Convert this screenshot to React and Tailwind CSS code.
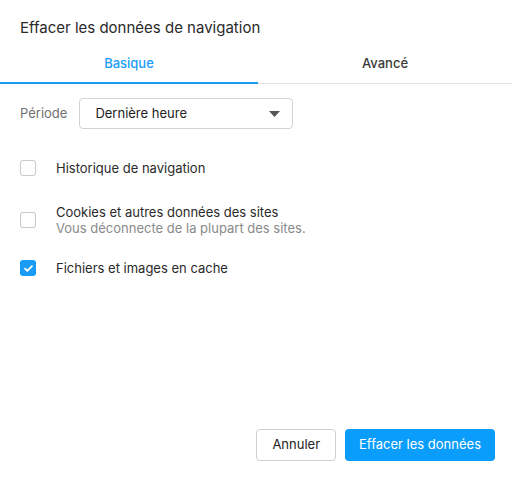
import React, { useState } from 'react';

const font = { fontFamily: 'Inter, "Liberation Sans", sans-serif' };

function Check({ checked }) {
  if (checked) {
    return (
      <span className="block w-4 h-4 rounded-[3px] bg-[#1a9bf5] flex items-center justify-center shrink-0">
        <svg width="11" height="11" viewBox="0 0 12 12">
          <path d="M2.2 6.2l2.5 2.5 5.1-5.3" fill="none" stroke="white" strokeWidth="2" strokeLinecap="round" strokeLinejoin="round" />
        </svg>
      </span>
    );
  }
  return <span className="block w-4 h-4 rounded-[3px] border border-[#c9c9c9] bg-white shrink-0" />;
}

export default function App() {
  const [items] = useState([
    { label: 'Historique de navigation', checked: false, cls: '' },
    { label: 'Cookies et autres données des sites', sub: 'Vous déconnecte de la plupart des sites.', checked: false, cls: 'mt-[28px]' },
    { label: 'Fichiers et images en cache', checked: true, cls: 'mt-[24px]' },
  ]);

  return (
    <div className="w-[512px] h-[477px] bg-white flex flex-col text-[#303030]" style={font}>
      <h1 className="px-5 pt-[18px] text-[15px] leading-5 text-[#2a2a2a]">Effacer les données de navigation</h1>

      {/* Tabs */}
      <div className="mt-[13px] flex border-b border-[#e3e3e3]">
        <div className="w-[258px] h-[33px] flex items-start justify-center border-b-2 border-[#1a9bf5] -mb-px text-[13px] font-medium text-[#1a9bf5] pt-[3px]">
          Basique
        </div>
        <div className="flex-1 flex items-start justify-center text-[13px] font-medium text-[#3a3a3a] pt-[3px]">
          Avancé
        </div>
      </div>

      {/* Période */}
      <div className="mt-[14px] px-5 flex items-center gap-3">
        <span className="text-[13px] text-[#707070]">Période</span>
        <div className="w-[214px] h-[31px] border border-[#d2d2d2] rounded-[4px] flex items-center justify-between pl-[15px] pr-[12px] text-[13px] text-[#222]">
          Dernière heure
          <svg width="11" height="6" viewBox="0 0 11 6">
            <path d="M0 0h11L5.5 6z" fill="#555" />
          </svg>
        </div>
      </div>

      {/* Options */}
      <div className="mt-[31px] px-5 flex flex-col">
        {items.map((it) => (
          <div key={it.label} className={`flex items-center gap-5 ${it.cls}`}>
            <Check checked={it.checked} />
            <div className="text-[13px] leading-4">
              <div className="text-[#2a2a2a]">{it.label}</div>
              {it.sub && <div className="text-[#8a8a8a]">{it.sub}</div>}
            </div>
          </div>
        ))}
      </div>

      {/* Buttons */}
      <div className="mt-auto mb-4 pr-[17px] flex justify-end gap-[9px]">
        <button className="h-8 px-[15px] border border-[#cfcfcf] rounded-[4px] bg-white text-[13px] text-[#222]">Annuler</button>
        <button className="h-8 px-[14px] rounded-[4px] bg-[#0a9dfb] text-[13px] text-white">Effacer les données</button>
      </div>
    </div>
  );
}
